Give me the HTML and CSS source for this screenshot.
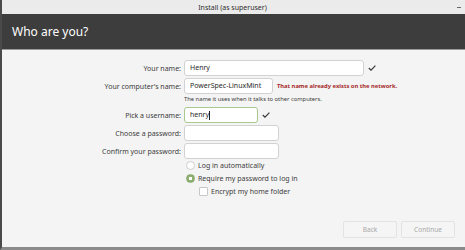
FILE: index.html
```html
<!DOCTYPE html>
<html>
    <head>
        <meta charset="utf-8" />
        <title>Install (as superuser)</title>
        <link rel="stylesheet" href="styles.css">
    </head>
    <body>
        <div class="window">
            <div class="titlebar">
                <span class="title">Install (as superuser)</span>
                <span class="minimize"></span>
            </div>
            <div class="header">Who are you?</div>
            <div class="content">
                <div class="form">
                    <label class="label">Your name:</label>
                    <div class="field">
                        <div class="input wide">Henry</div>
                        <svg class="check" width="8" height="6" viewBox="0 0 8 6"><polyline points="0.8,3 3,5.2 7.4,0.6" fill="none" stroke="#3a3a3a" stroke-width="1.2"/></svg>
                    </div>

                    <label class="label">Your computer's name:</label>
                    <div class="field">
                        <div class="input medium">PowerSpec-LinuxMint</div>
                        <span class="error">That name already exists on the network.</span>
                    </div>

                    <span></span>
                    <div class="hint">The name it uses when it talks to other computers.</div>

                    <label class="label">Pick a username:</label>
                    <div class="field">
                        <div class="input short focused">henry<span class="caret"></span></div>
                        <svg class="check" width="8" height="6" viewBox="0 0 8 6"><polyline points="0.8,3 3,5.2 7.4,0.6" fill="none" stroke="#3a3a3a" stroke-width="1.2"/></svg>
                    </div>

                    <label class="label">Choose a password:</label>
                    <div class="field">
                        <div class="input pass"></div>
                    </div>

                    <label class="label">Confirm your password:</label>
                    <div class="field">
                        <div class="input pass"></div>
                    </div>
                </div>

                <div class="options">
                    <div class="option">
                        <span class="radio"></span>
                        <span>Log in automatically</span>
                    </div>
                    <div class="option">
                        <span class="radio checked"></span>
                        <span>Require my password to log in</span>
                    </div>
                    <div class="option sub">
                        <span class="checkbox"></span>
                        <span>Encrypt my home folder</span>
                    </div>
                </div>

                <div class="buttons">
                    <div class="button">Back</div>
                    <div class="button">Continue</div>
                </div>
            </div>
        </div>
    </body>
</html>
```

FILE: styles.css
```css
html, body {
    margin: 0;
    padding: 0;
}
body {
    width: 465px;
    height: 250px;
    overflow: hidden;
    font-family: "Noto Sans", "Open Sans", sans-serif;
    color: #3c3c3c;
}
.window {
    height: 250px;
    display: flex;
    flex-direction: column;
    box-sizing: border-box;
    border-left: 2px solid #4a4a4a;
    border-bottom: 3px solid #8a8a8a;
    background: #f4f4f4;
}
.titlebar {
    height: 14px;
    background: #ebebeb;
    display: flex;
    align-items: center;
    justify-content: center;
    position: relative;
}
.title {
    font-size: 7px;
    color: #2e2e2e;
    margin-left: -2px;
}
.minimize {
    position: absolute;
    right: 4px;
    top: 7px;
    width: 4px;
    height: 1px;
    background: #666;
}
.header {
    height: 36px;
    background: #3d3d3d;
    color: #ffffff;
    font-size: 12px;
    line-height: 36px;
    padding-left: 10px;
    box-sizing: border-box;
    border-bottom: 1px solid #9a9a9a;
}
.content {
    flex: 1;
    display: flex;
    flex-direction: column;
    padding-top: 10px;
}
.form {
    display: grid;
    grid-template-columns: 179px auto;
    column-gap: 3px;
    row-gap: 2px;
    align-items: center;
}
.label {
    text-align: right;
    font-size: 7px;
}
.field {
    display: flex;
    align-items: center;
}
.input {
    height: 16px;
    box-sizing: border-box;
    background: #ffffff;
    border: 1px solid #d2d2d2;
    border-radius: 3px;
    font-size: 7px;
    line-height: 14px;
    padding-left: 5px;
    color: #2a2a2a;
    display: flex;
    align-items: center;
}
.wide {
    width: 180px;
}
.medium {
    width: 89px;
}
.short {
    width: 74px;
}
.pass {
    width: 95px;
}
.focused {
    border-color: #a9c98f;
}
.caret {
    display: inline-block;
    width: 1px;
    height: 9px;
    background: #222;
}
.check {
    margin-left: 4px;
}
.error {
    margin-left: 4px;
    font-size: 5.8px;
    font-weight: bold;
    color: #a52a2a;
}
.hint {
    font-size: 5.8px;
    height: 9px;
    line-height: 9px;
    margin-top: -1px;
    margin-bottom: 1px;
}
.options {
    display: flex;
    flex-direction: column;
    padding-left: 184px;
    margin-top: 0;
}
.option {
    display: flex;
    align-items: center;
    height: 13px;
    font-size: 7px;
    gap: 3px;
}
.option.sub {
    padding-left: 13px;
}
.radio {
    width: 7px;
    height: 7px;
    border-radius: 50%;
    border: 1px solid #cdcdcd;
    background: #ffffff;
}
.radio.checked {
    border-color: #87a96b;
    background: radial-gradient(circle, #ffffff 0 1.5px, #8cb06f 2px);
}
.checkbox {
    width: 7px;
    height: 7px;
    border: 1px solid #c8c8c8;
    border-radius: 1px;
    background: #ffffff;
}
.buttons {
    margin-top: auto;
    margin-bottom: 9px;
    display: flex;
    justify-content: flex-end;
    gap: 4px;
    padding-right: 10px;
}
.button {
    width: 54px;
    height: 17px;
    box-sizing: border-box;
    border: 1px solid #e3e3e3;
    border-radius: 2px;
    background: #f5f5f5;
    color: #a8a8a8;
    font-size: 6.5px;
    display: flex;
    align-items: center;
    justify-content: center;
}
```
